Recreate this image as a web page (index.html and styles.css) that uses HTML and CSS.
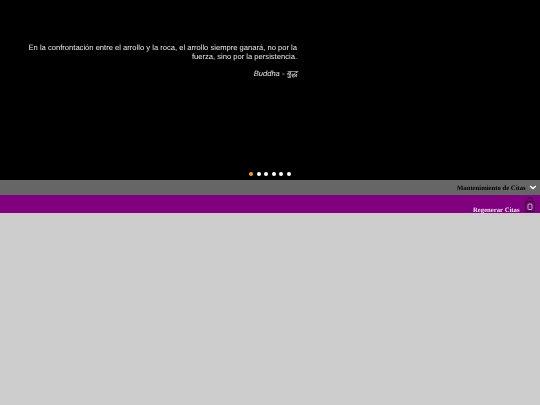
FILE: index.html
```html
<!DOCTYPE html>
<html lang="es">
<head>
  <meta charset="UTF-8" />
  <title>Citas</title>
  <link rel="stylesheet" href="styles.css">
</head>
<body>
  <div class="slider">
    <div class="quote">
      <p class="quote-text">En la confrontación entre el arrollo y la roca, el arrollo siempre ganará, no por la fuerza, sino por la persistencia.</p>
      <p class="quote-author">Buddha - बुद्ध</p>
    </div>
    <div class="dots">
      <span class="dot active"></span>
      <span class="dot"></span>
      <span class="dot"></span>
      <span class="dot"></span>
      <span class="dot"></span>
      <span class="dot"></span>
    </div>
  </div>

  <div class="bar-maint">
    <span class="bar-title">Mantenimiento de Citas</span>
    <span class="chevron">
      <svg width="8" height="6" viewBox="0 0 8 6"><path d="M1.2 1 L4 3.6 L6.8 1" fill="none" stroke="#fff" stroke-width="1.5"/></svg>
    </span>
  </div>

  <div class="bar-regen">
    <span class="regen-link">Regenerar Citas</span>
    <svg class="regen-icon" width="10" height="15" viewBox="0 0 10 15"><path d="M2.5 5 V2.5 Q2.5 1 5 1 Q7.5 1 7.5 2.5 V5" fill="none" stroke="#3a0a3a"/><rect x="0.5" y="4.5" width="9" height="10" rx="1" fill="#700a72" stroke="#3a0a3a"/><rect x="3" y="7" width="4" height="5.5" rx="1" fill="none" stroke="#d0a8d0"/></svg>
  </div>
</body>
</html>
```

FILE: styles.css
```css
html, body {
  margin: 0;
  padding: 0;
  min-height: 100vh;
  background: #cccccc;
  text-rendering: geometricPrecision;
}

.slider {
  height: 180px;
  background: #000;
  display: flex;
  flex-direction: column;
  justify-content: space-between;
  box-sizing: border-box;
  padding: 43px 0 4px;
}

.quote {
  width: 269px;
  margin-left: 28px;
  text-align: right;
  color: #e8e8e8;
  font-family: "Liberation Sans", Arial, sans-serif;
  font-size: 7.6px;
  line-height: 9px;
  will-change: transform;
}

.quote-text {
  margin: 0 0 8px;
}

.quote-author {
  margin: 0;
  font-style: italic;
}

.dots {
  display: flex;
  justify-content: center;
  gap: 3.6px;
}

.dot {
  width: 4px;
  height: 4px;
  border-radius: 50%;
  background: #fff;
}

.dot.active {
  background: #f0a030;
}

.bar-maint {
  height: 15px;
  background: #666;
  display: flex;
  justify-content: flex-end;
  align-items: center;
  gap: 3px;
  padding-right: 3px;
}

.bar-title {
  font-family: "Liberation Serif", "Times New Roman", serif;
  font-size: 6.7px;
  font-weight: bold;
  color: #000;
  margin-top: 1px;
  will-change: transform;
}

.chevron {
  width: 8px;
  height: 8px;
  display: flex;
  align-items: center;
}

.bar-regen {
  height: 18px;
  background: #800080;
  display: flex;
  justify-content: flex-end;
  align-items: flex-end;
  gap: 6px;
  padding-right: 5px;
}

.regen-link {
  font-family: "Liberation Serif", "Times New Roman", serif;
  font-size: 6.7px;
  font-weight: bold;
  color: #f4e0f4;
  margin-bottom: -1px;
  will-change: transform;
}

.regen-icon {
  flex-shrink: 0;
  margin-bottom: 1px;
}
```
